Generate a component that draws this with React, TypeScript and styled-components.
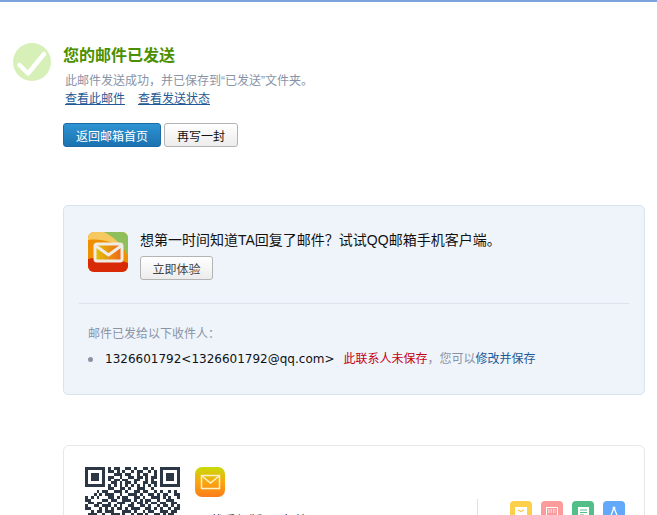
import { createGlobalStyle, styled } from "styled-components";

const QR_ROWS = [
  "111111101011001101001101001111111",
  "100000101101010010110010101000001",
  "101110100011101100101100101011101",
  "101110101100100110110101101011101",
  "101110101011011001100101001011101",
  "100000100110101101001101101000001",
  "111111101010101010101010101111111",
  "000000001100110100111001000000000",
  "000010110011101001101100101001010",
  "000101011100100111010011010110011",
  "101010001101011001101001110101001",
  "110000110110011101010110010011100",
  "011011001001110010110101101100110",
  "100110111010100110011010010110101",
  "110001010101101011100110101001011",
  "001011011100011101001011001110110",
  "011100100111010010110100110101100",
];

const GlobalStyle = createGlobalStyle`
  html, body {
    margin: 0;
    height: 515px;
    overflow: hidden;
    background: #fff;
  }
  body {
    font-family: "Liberation Sans", "Noto Sans CJK SC", sans-serif;
    font-size: 12px;
  }
`;

const Page = styled.div`
  height: 515px;
  overflow: hidden;
  border-top: 2px solid #7ba4dc;
  box-sizing: border-box;
`;

const Result = styled.section`
  display: flex;
  padding: 41px 0 0 13px;
`;

const CheckBadge = styled.div`
  width: 38px;
  height: 38px;
  flex: none;
  margin-right: 12px;
`;

const ResultBody = styled.div`
  display: flex;
  flex-direction: column;
  align-items: flex-start;
`;

const Title = styled.h1`
  margin: 1px 0 0;
  font-size: 16px;
  line-height: 24px;
  font-weight: 700;
  color: #4b8f00;
`;

const Note = styled.p`
  margin: 4px 0 0 2px;
  line-height: 18px;
  font-size: 12px;
  color: #8a93a5;
`;

const LinkRow = styled.div`
  display: flex;
  gap: 13px;
  margin: 1px 0 0 2px;
  line-height: 17px;
`;

const TextLink = styled.a`
  color: #1f5a96;
  font-size: 12px;
  text-decoration: underline;
`;

const ButtonRow = styled.div`
  display: flex;
  gap: 3px;
  margin-top: 15px;
`;

const PrimaryButton = styled.button`
  width: 98px;
  height: 24px;
  padding: 0;
  border: 1px solid #1c6ba6;
  border-radius: 3px;
  background: linear-gradient(#2f93d2, #1b72b0);
  color: #fff;
  font: inherit;
`;

const PlainButton = styled.button`
  width: ${(p) => p.$width}px;
  height: 24px;
  padding: 0;
  border: 1px solid #b4b4b4;
  border-radius: 3px;
  background: linear-gradient(#fff, #ececec);
  color: ${(p) => p.$color};
  font: inherit;
`;

const InfoCard = styled.section`
  margin: 58px 12px 0 63px;
  height: 190px;
  box-sizing: border-box;
  padding: 26px 15px 0;
  background: #eff4fb;
  border: 1px solid #d8e3f0;
  border-radius: 5px;
`;

const Promo = styled.div`
  display: flex;
  gap: 12px;
  padding: 0 9px 23px;
  border-bottom: 1px solid #dde3eb;
`;

const AppIcon = styled.div`
  width: 40px;
  height: 40px;
  flex: none;
`;

const PromoBody = styled.div`
  display: flex;
  flex-direction: column;
  align-items: flex-start;
  gap: 7px;
`;

const PromoText = styled.p`
  margin: 0;
  font-size: 14px;
  line-height: 17px;
  color: #111;
`;

const Recipients = styled.div`
  padding: 21px 9px 0;
`;

const RecipientsLabel = styled.p`
  margin: 0;
  line-height: 18px;
  color: #8a93a5;
`;

const RecipientRow = styled.div`
  display: flex;
  align-items: center;
  margin-top: 7px;
  line-height: 18px;
`;

const Bullet = styled.span`
  width: 5px;
  height: 5px;
  border-radius: 50%;
  background: #8a93a5;
  margin-right: 12px;
`;

const Address = styled.span`
  font-family: "DejaVu Sans", sans-serif;
  font-size: 12px;
  color: #111;
  margin-right: 9px;
`;

const Warning = styled.span`
  color: #c40012;
`;

const Muted = styled.span`
  color: #8a93a5;
`;

const EditLink = styled.a`
  color: #1f5a96;
`;

const AppCard = styled.section`
  display: flex;
  margin: 50px 12px 0 63px;
  height: 140px;
  box-sizing: border-box;
  padding: 21px 19px 0 21px;
  background: #fff;
  border: 1px solid #e6e8ea;
  border-radius: 6px;
`;

const Qr = styled.svg`
  width: 95px;
  height: 95px;
  flex: none;
`;

const AppIntro = styled.div`
  display: flex;
  flex-direction: column;
  margin-left: 15px;
  flex: 1;
`;

const MailBadge = styled.div`
  width: 30px;
  height: 30px;
`;

const IntroText = styled.p`
  margin: 16px 0 0 2px;
  font-size: 13px;
  line-height: 16px;
  color: #333;
`;

const ToolGrid = styled.div`
  display: flex;
  gap: 9px;
  height: 60px;
  margin-top: 32px;
  padding: 2px 0 0 32px;
  border-left: 1px solid #d8e3f0;
`;

const ToolIcon = styled.svg`
  width: 22px;
  height: 22px;
  flex: none;
`;

export default function App() {
  return (
    <Page>
      <GlobalStyle />
      <Result>
        <CheckBadge>
          <svg width="38" height="38" viewBox="0 0 38 38">
            <circle cx="19" cy="19" r="19" fill="#d6f0b8" />
            <path d="M6.5 22l8.5 8.5L31 11" fill="none" stroke="#fff" strokeWidth="4.5" strokeLinecap="round" strokeLinejoin="round" />
          </svg>
        </CheckBadge>
        <ResultBody>
          <Title>您的邮件已发送</Title>
          <Note>此邮件发送成功，并已保存到“已发送”文件夹。</Note>
          <LinkRow>
            <TextLink href="#">查看此邮件</TextLink>
            <TextLink href="#">查看发送状态</TextLink>
          </LinkRow>
          <ButtonRow>
            <PrimaryButton>返回邮箱首页</PrimaryButton>
            <PlainButton $width={74} $color="#111">再写一封</PlainButton>
          </ButtonRow>
        </ResultBody>
      </Result>

      <InfoCard>
        <Promo>
          <AppIcon>
            <svg width="40" height="40" viewBox="0 0 40 40">
              <defs>
                <clipPath id="round">
                  <rect width="40" height="40" rx="6" />
                </clipPath>
                <linearGradient id="inner" x1="0" y1="0" x2="1" y2="0">
                  <stop offset="0" stopColor="#e2c400" />
                  <stop offset="1" stopColor="#f0641e" />
                </linearGradient>
              </defs>
              <g clipPath="url(#round)">
                <rect width="40" height="40" fill="#f09000" />
                <path d="M0 0h40v20C28 10 12 6 0 8z" fill="#f6c860" />
                <path d="M16 0h24v24C34 12 26 5 16 0z" fill="#8fbf5a" />
                <path d="M0 27c14-4 28-1 40 4v9H0z" fill="#d92a08" />
              </g>
              <rect x="7" y="12" width="27" height="17" rx="2" fill="url(#inner)" stroke="#efece6" strokeWidth="3" />
              <path d="M8 14l12.500 9L33 14" fill="none" stroke="#efece6" strokeWidth="3" />
            </svg>
          </AppIcon>
          <PromoBody>
            <PromoText>想第一时间知道TA回复了邮件？试试QQ邮箱手机客户端。</PromoText>
            <PlainButton $width={73} $color="#444">立即体验</PlainButton>
          </PromoBody>
        </Promo>
        <Recipients>
          <RecipientsLabel>邮件已发给以下收件人：</RecipientsLabel>
          <RecipientRow>
            <Bullet />
            <Address>1326601792&lt;1326601792@qq.com&gt;</Address>
            <Warning>此联系人未保存</Warning>
            <Muted>，您可以</Muted>
            <EditLink>修改并保存</EditLink>
          </RecipientRow>
        </Recipients>
      </InfoCard>

      <AppCard>
        <Qr viewBox="0 0 33 33" shapeRendering="crispEdges">
          {QR_ROWS.flatMap((row, y) =>
            [...row].map((cell, x) =>
              cell === "1" ? <rect key={`${x}-${y}`} x={x} y={y} width="1" height="1" fill="#2b3744" /> : null,
            ),
          )}
        </Qr>
        <AppIntro>
          <MailBadge>
            <svg width="30" height="30" viewBox="0 0 30 30">
              <defs>
                <linearGradient id="badge" x1="0" y1="0" x2="0" y2="1">
                  <stop offset="0" stopColor="#c6dc08" />
                  <stop offset=".5" stopColor="#fba60e" />
                  <stop offset="1" stopColor="#fb7d1c" />
                </linearGradient>
              </defs>
              <rect width="30" height="30" rx="7" fill="url(#badge)" />
              <rect x="6.500" y="8.500" width="18" height="13" fill="none" stroke="#fdf3c8" strokeWidth="1.500" />
              <path d="M7 9l8.500 7L24 9" fill="none" stroke="#fdf3c8" strokeWidth="1.500" />
            </svg>
          </MailBadge>
          <IntroText>下载手机版QQ邮箱</IntroText>
        </AppIntro>
        <ToolGrid>
          <ToolIcon viewBox="0 0 22 22">
            <rect width="22" height="22" rx="4" fill="#fdd04c" />
            <rect x="5" y="6" width="12" height="11" fill="#fff" />
            <path d="M8 9l3 1.500L14 9" fill="none" stroke="#fdc93c" strokeWidth="1.200" />
          </ToolIcon>
          <ToolIcon viewBox="0 0 22 22">
            <rect width="22" height="22" rx="4" fill="#fb9b9b" />
            <rect x="5.500" y="6.500" width="11" height="10" fill="none" stroke="#fff" />
            <path d="M7 9h8M7 11h8" stroke="#fff" strokeDasharray="1.500 1" />
          </ToolIcon>
          <ToolIcon viewBox="0 0 22 22">
            <rect width="22" height="22" rx="4" fill="#52bf88" />
            <rect x="6" y="6" width="11" height="13" fill="#fff" />
            <path d="M8 9h7M8 11.500h7M8 14h4" stroke="#52bf88" />
          </ToolIcon>
          <ToolIcon viewBox="0 0 22 22">
            <rect width="22" height="22" rx="4" fill="#62a8fb" />
            <circle cx="11" cy="7" r="1.500" fill="#fff" />
            <path d="M10.500 8L7 17M11.500 8L15 17" stroke="#fff" strokeWidth="1.300" fill="none" />
          </ToolIcon>
        </ToolGrid>
      </AppCard>
    </Page>
  );
}
